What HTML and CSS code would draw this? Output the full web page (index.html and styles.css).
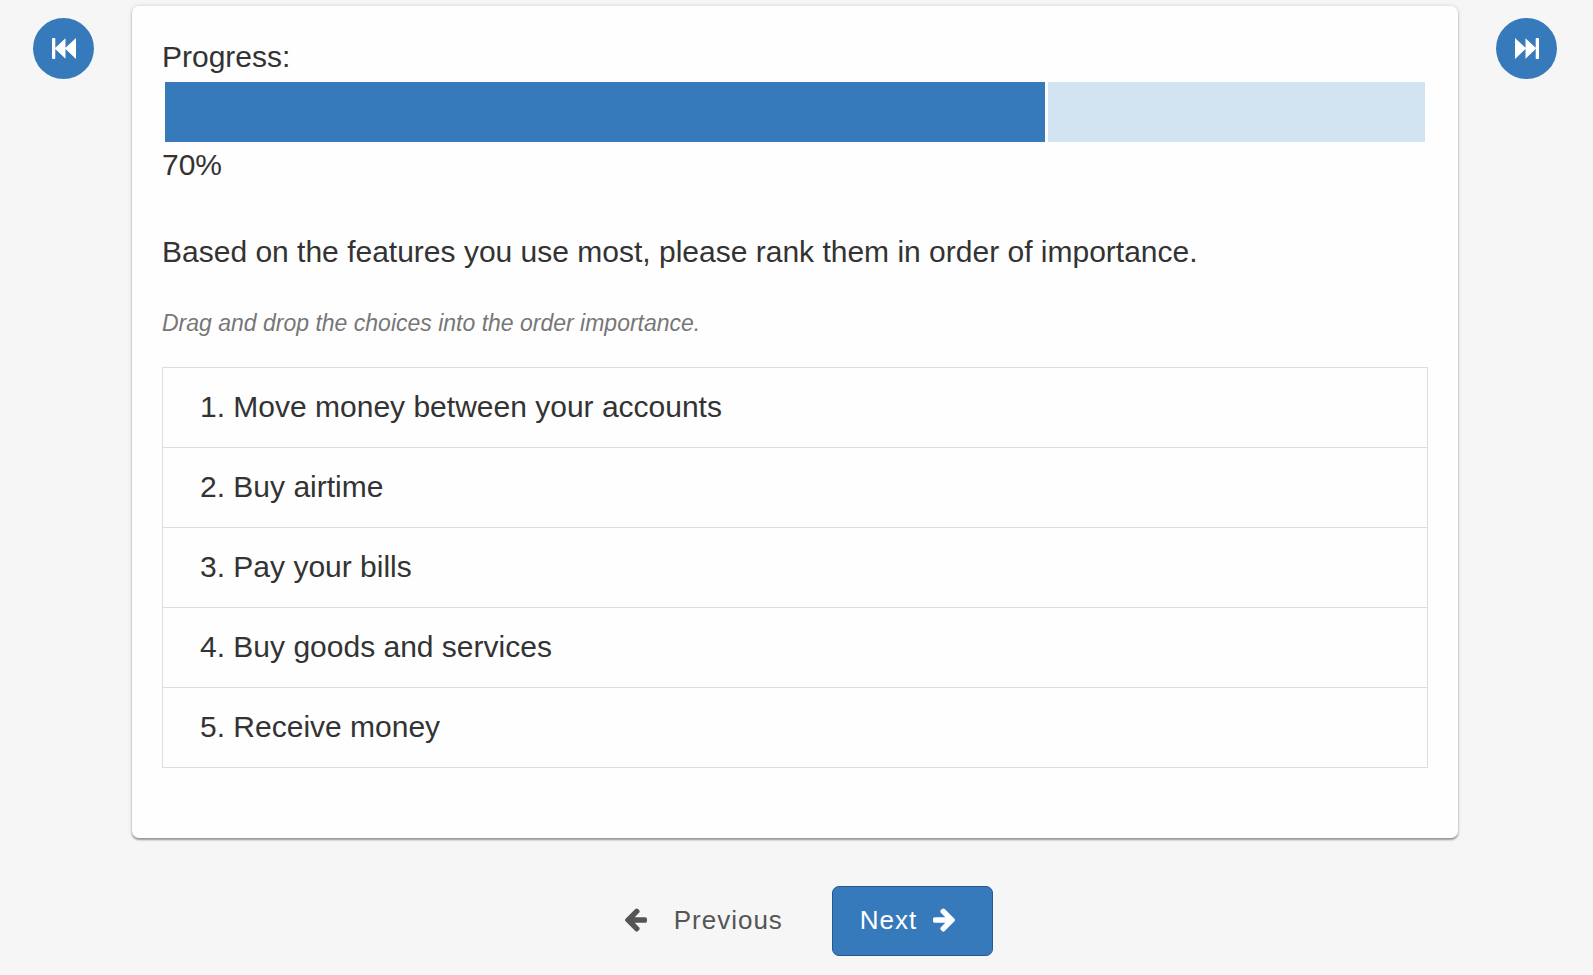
FILE: index.html
```html
<!DOCTYPE html>
<html lang="en">
<head>
    <meta charset="UTF-8">
    <meta name="viewport" content="width=device-width, initial-scale=1.0">
    <title>Survey</title>
    <link rel="stylesheet" href="styles.css">
</head>
<body>
    <div class="survey">
        <button type="button" class="jump" aria-label="First page">
            <svg class="jump-icon" viewBox="0 0 24 21" aria-hidden="true">
                <path d="M1 0H2.500Q3.300 0 3.300 1V9.800L13.500 0.200V9.800L24 0V21L13.500 11V20.800L3.300 11V20Q3.300 21 2.500 21H1Q0 21 0 20V1Q0 0 1 0Z"/>
            </svg>
        </button>

        <main class="card">
            <div class="progress">
                <div id="progress-label">Progress:</div>
                <div class="progress-bar" role="progressbar" aria-labelledby="progress-label" aria-valuemin="0" aria-valuemax="100" aria-valuenow="70">
                    <div class="progress-done"></div>
                    <div class="progress-left"></div>
                </div>
                <div>70%</div>
            </div>

            <h1 class="question">Based on the features you use most, please rank them in order of importance.</h1>
            <p class="hint">Drag and drop the choices into the order importance.</p>

            <ol class="choices">
                <li>Move money between your accounts</li>
                <li>Buy airtime</li>
                <li>Pay your bills</li>
                <li>Buy goods and services</li>
                <li>Receive money</li>
            </ol>
        </main>

        <button type="button" class="jump" aria-label="Last page">
            <svg class="jump-icon" viewBox="0 0 24 21" aria-hidden="true">
                <path d="M23 0H21.500Q20.700 0 20.700 1V9.800L10.500 0.200V9.800L0 0V21L10.500 11V20.800L20.700 11V20Q20.700 21 21.500 21H23Q24 21 24 20V1Q24 0 23 0Z"/>
            </svg>
        </button>

        <div class="nav">
            <button type="button" class="btn btn-previous">
                <svg class="arrow" viewBox="192 155 1472 1609" aria-hidden="true">
                    <path d="M1664 896v128q0 53-32.500 90.500t-84.500 37.500h-704l293 294q38 36 38 90t-38 90l-75 76q-37 37-90 37-52 0-91-37l-651-652q-37-37-37-90 0-52 37-91l651-650q38-38 91-38 52 0 90 38l75 74q38 38 38 91t-38 91l-293 293h704q52 0 84.500 37.500t32.500 90.500z"/>
                </svg>
                Previous
            </button>
            <button type="button" class="btn btn-next">
                Next
                <svg class="arrow" viewBox="128 155 1472 1609" aria-hidden="true">
                    <path d="M1600 960q0 54-37 91l-651 651q-39 37-91 37-51 0-90-37l-75-75q-38-38-38-91t38-91l293-293h-704q-52 0-84.500-37.500t-32.500-90.500v-128q0-53 32.500-90.500t84.500-37.500h704l-293-294q-38-36-38-90t38-90l75-75q38-38 90-38 53 0 91 38l651 651q37 35 37 90z"/>
                </svg>
            </button>
        </div>
    </div>
</body>
</html>
```

FILE: styles.css
```css
:root {
    --blue: #367abb;
    --blue-light: #d2e4f2;
    --text: #333333;
    --border: #dddddd;
}

* {
    box-sizing: border-box;
    margin: 0;
    padding: 0;
}

body {
    font-family: "Liberation Sans", Arial, sans-serif;
    font-size: 30px;
    line-height: 42px;
    background-color: #f6f6f6;
    color: var(--text);
}

button {
    font-family: inherit;
    cursor: pointer;
}

.survey {
    display: grid;
    grid-template-columns: 61px 1fr 61px;
    column-gap: 38px;
    align-items: start;
    padding: 6px 36px 18px 33px;
}

.jump {
    display: flex;
    align-items: center;
    justify-content: center;
    height: 61px;
    margin-top: 12px;
    border: none;
    border-radius: 50%;
    background-color: var(--blue);
}

.jump-icon {
    width: 24px;
    height: 21px;
    fill: #ffffff;
}

.card {
    padding: 30px 30px 70px;
    background-color: #fefefe;
    border-radius: 7px;
    box-shadow: 0 2px 2px rgba(0, 0, 0, 0.35), 0 0 4px rgba(0, 0, 0, 0.15);
}

.progress-bar {
    display: flex;
    gap: 3px;
    height: 60px;
    margin: 4px 3px 2px;
}

.progress-done {
    flex: 70;
    background-color: var(--blue);
}

.progress-left {
    flex: 30;
    background-color: var(--blue-light);
}

.question {
    margin-top: 45px;
    font-size: 30px;
    font-weight: normal;
}

.hint {
    margin: 33px 0 27px;
    font-size: 23px;
    line-height: 34px;
    font-style: italic;
    color: #777777;
}

.choices {
    list-style-position: inside;
    border: 1px solid var(--border);
}

.choices li {
    padding: 18px 37px 19px;
}

.choices li + li {
    border-top: 1px solid var(--border);
}

.nav {
    grid-column: 1 / -1;
    display: flex;
    justify-content: center;
    gap: 21px;
    margin-top: 48px;
}

.btn {
    display: flex;
    align-items: center;
    gap: 16px;
    height: 70px;
    padding: 0 27px 2px;
    border: 1px solid transparent;
    border-radius: 7px;
    font-size: 26px;
    letter-spacing: 1px;
}

.btn-previous {
    gap: 27px;
    background: none;
    color: #555555;
}

.btn-next {
    padding-right: 37px;
    border-color: #265a8c;
    background-color: var(--blue);
    color: #ffffff;
}

.arrow {
    width: 22px;
    height: 24px;
    fill: currentColor;
}
```
